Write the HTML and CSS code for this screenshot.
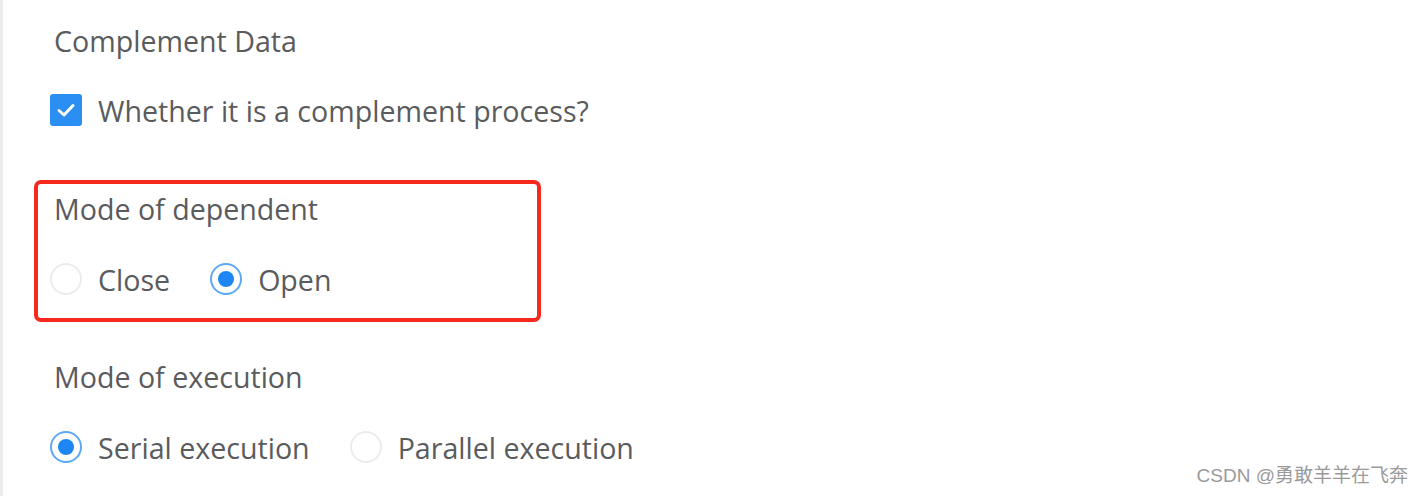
FILE: index.html
```html
<!DOCTYPE html>
<html>
<head>
<meta charset="utf-8">
<link rel="stylesheet" href="styles.css">
</head>
<body>
<div class="page">
  <div class="form">
    <div class="label first">Complement Data</div>
    <div class="row check-row">
      <span class="checkbox"><svg width="32" height="32" viewBox="0 0 32 32"><path d="M9 16.5 L14 21 L23 11.5" fill="none" stroke="#fff" stroke-width="3" stroke-linecap="round" stroke-linejoin="round"/></svg></span>
      <span class="opt-text">Whether it is a complement process?</span>
    </div>
    <div class="highlight">
      <div class="label">Mode of dependent</div>
      <div class="row radio-row">
        <span class="radio"></span><span class="opt-text">Close</span>
        <span class="radio checked"></span><span class="opt-text">Open</span>
      </div>
    </div>
    <div class="label third">Mode of execution</div>
    <div class="row radio-row last">
      <span class="radio checked"></span><span class="opt-text">Serial execution</span>
      <span class="radio"></span><span class="opt-text">Parallel execution</span>
    </div>
  </div>
  <div class="watermark">CSDN @勇敢羊羊在飞奔</div>
</div>
</body>
</html>
```
FILE: styles.css
```css
html, body {
  margin: 0;
  padding: 0;
  background: #fff;
}
.page {
  position: relative;
  width: 1424px;
  height: 496px;
  box-sizing: border-box;
  border-left: 3px solid #ececec;
  font-family: "Open Sans", "Noto Sans CJK SC", sans-serif;
  color: #5a5b5d;
  overflow: hidden;
}
.form {
  display: flex;
  flex-direction: column;
  align-items: flex-start;
  padding-left: 47px;
  padding-top: 21px;
}
.label {
  font-size: 28.6px;
  line-height: 40px;
  height: 40px;
  padding-left: 4px;
  white-space: nowrap;
}
.row {
  display: flex;
  align-items: center;
  height: 40px;
  font-size: 28.6px;
}
.check-row {
  margin-top: 29px;
}
.checkbox {
  width: 32px;
  height: 32px;
  border-radius: 3px;
  background: #2b8ef2;
  display: flex;
}
.opt-text {
  margin-left: 16px;
  margin-right: 40px;
  white-space: nowrap;
}
.highlight {
  margin-top: 50px;
  margin-left: -16px;
  width: 507px;
  height: 142px;
  box-sizing: border-box;
  border: 4px solid #f52a1c;
  border-radius: 7px;
  padding: 5px 0 0 12px;
  display: flex;
  flex-direction: column;
}
.radio-row {
  margin-top: 30px;
}
.radio {
  width: 32px;
  height: 32px;
  box-sizing: border-box;
  border: 2px solid #ececec;
  border-radius: 50%;
  display: flex;
  align-items: center;
  justify-content: center;
  flex-shrink: 0;
}
.radio.checked {
  border-color: #5ea8f5;
}
.radio.checked::after {
  content: "";
  width: 16px;
  height: 16px;
  border-radius: 50%;
  background: #1d86f2;
}
.third {
  margin-top: 35px;
}
.watermark {
  position: absolute;
  right: 16px;
  bottom: 8px;
  font-family: "Liberation Sans", "Noto Sans CJK SC", sans-serif;
  font-size: 19px;
  color: #9a9a9a;
  line-height: 24px;
}
```
